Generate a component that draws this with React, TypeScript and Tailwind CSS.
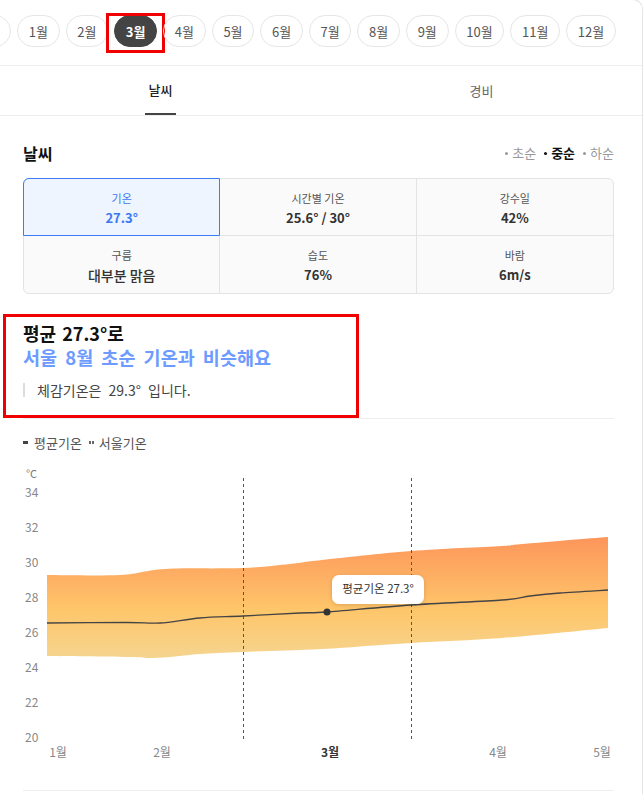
import React from 'react'

type Pt = [number, number]

const MONTHS = ['1월', '2월', '3월', '4월', '5월', '6월', '7월', '8월', '9월', '10월', '11월', '12월']

const TOP: Pt[] = [[47, 574], [120, 574], [165, 568], [243, 567], [290, 563], [322, 559], [411, 550], [502, 545], [522, 543], [608, 536]]
const BOTTOM: Pt[] = [[47, 655], [127, 656], [150, 657], [170, 656], [200, 653], [243, 651], [322, 648], [411, 642], [502, 637], [608, 627]]
const AVG: Pt[] = [[47, 622], [127, 621.5], [160, 622], [200, 617], [243, 615], [300, 612], [327, 611], [411, 604], [502, 599], [530, 595], [560, 592], [608, 589]]

function smooth(pts: Pt[]) {
  let d = `M${pts[0][0]},${pts[0][1]}`
  for (let i = 0; i < pts.length - 1; i++) {
    const p0 = pts[i - 1] || pts[i]
    const p1 = pts[i]
    const p2 = pts[i + 1]
    const p3 = pts[i + 2] || p2
    const c1x = p1[0] + (p2[0] - p0[0]) / 6
    const c1y = p1[1] + (p2[1] - p0[1]) / 6
    const c2x = p2[0] - (p3[0] - p1[0]) / 6
    const c2y = p2[1] - (p3[1] - p1[1]) / 6
    d += ` C${c1x},${c1y} ${c2x},${c2y} ${p2[0]},${p2[1]}`
  }
  return d
}

const band = smooth(TOP) + ' L' + smooth([...BOTTOM].reverse()).slice(1) + ' Z'

const CELLS = [
  { label: '기온', value: '27.3°', active: true },
  { label: '시간별 기온', value: '25.6° / 30°' },
  { label: '강수일', value: '42%' },
  { label: '구름', value: '대부분 맑음', big: true },
  { label: '습도', value: '76%' },
  { label: '바람', value: '6m/s' },
]

const Y_TICKS = [34, 32, 30, 28, 26, 24, 22, 20]
const X_TICKS = [
  { x: 58, t: '1월' },
  { x: 162, t: '2월' },
  { x: 330, t: '3월', bold: true },
  { x: 498, t: '4월' },
  { x: 602, t: '5월' },
]

function Chart() {
  return (
    <svg className="block" width="643" height="300" viewBox="0 460 643 300">
      <defs>
        <linearGradient id="bandFill" gradientUnits="userSpaceOnUse" x1="0" y1="536" x2="0" y2="657">
          <stop offset="0" stopColor="#fd955b" />
          <stop offset="0.6" stopColor="#fec66a" />
          <stop offset="1" stopColor="#f5d48f" />
        </linearGradient>
        <filter id="tipShadow" x="-20%" y="-40%" width="140%" height="180%">
          <feDropShadow dx="0" dy="1" stdDeviation="2" floodColor="#000" floodOpacity="0.15" />
        </filter>
      </defs>
      <text x="26" y="477" fontSize="11" fill="#777">°C</text>
      {Y_TICKS.map((t, i) => (
        <text key={t} x="25" y={492 + i * 35 + 4} fontSize="12" fill="#888">
          {t}
        </text>
      ))}
      <path d={band} fill="url(#bandFill)" />
      <line x1="243.5" y1="477" x2="243.5" y2="739" stroke="#555" strokeDasharray="3 3" />
      <line x1="411.5" y1="477" x2="411.5" y2="739" stroke="#555" strokeDasharray="3 3" />
      <path d={smooth(AVG)} fill="none" stroke="#444" strokeWidth="1.3" />
      <circle cx="327" cy="611" r="3.5" fill="#333" />
      <rect x="332" y="574" width="92" height="29" rx="7" fill="#fff" filter="url(#tipShadow)" />
      <text x="378" y="592" fontSize="11.5" fill="#333" textAnchor="middle">
        평균기온 27.3°
      </text>
      {X_TICKS.map((l) => (
        <text
          key={l.t}
          x={l.x}
          y="756"
          fontSize="12"
          textAnchor="middle"
          fill={l.bold ? '#333' : '#888'}
          fontWeight={l.bold ? 700 : 400}
        >
          {l.t}
        </text>
      ))}
    </svg>
  )
}

function Dot({ dark }: { dark?: boolean }) {
  return <span className={`inline-block w-[3px] h-[3px] rounded-full mr-[4px] ${dark ? 'bg-[#111]' : 'bg-[#999]'}`} />
}

export default function App() {
  return (
    <div className="w-[643px] -mt-px border-t border-r border-[#e4e4e4] rounded-tr-[10px] bg-white overflow-hidden font-['Noto_Sans_CJK_KR','Noto_Sans',sans-serif] text-[#333]">
      {/* months */}
      <div className="flex gap-[6px] pt-[15px] pb-[18px] border-b border-[#eeeeee] overflow-hidden">
        <div className="shrink-0 -ml-[31px] w-[42px] h-[32px] rounded-full border border-[#e6e6e6]" />
        {MONTHS.map((m) => {
          const active = m === '3월'
          return (
            <div key={m} className="relative shrink-0">
              <div
                className={`h-[32px] px-[10.7px] rounded-full flex items-center text-[13px] leading-none ${
                  active ? 'bg-[#444] text-white font-bold border border-[#444]' : 'border border-[#e6e6e6] text-[#555]'
                }`}
              >
                {m}
              </div>
              {active && (
                <div className="absolute left-[-8px] right-[-8px] top-[-2px] bottom-[-6px] border-[3px] border-[#f00000]" />
              )}
            </div>
          )
        })}
      </div>

      {/* tabs */}
      <div className="flex border-b border-[#eeeeee]">
        <div className="flex-1 flex justify-center h-[49px]">
          <span className="flex items-center px-[4px] border-b-2 border-[#444] text-[13px] font-medium text-[#222]">날씨</span>
        </div>
        <div className="flex-1 flex justify-center items-center h-[49px] text-[13px] text-[#666]">경비</div>
      </div>

      <div className="pl-[23px] pr-[28px]">
        <div className="mt-[26px] flex items-center justify-between h-[22px]">
          <span className="text-[16px] font-bold text-[#111]">날씨</span>
          <div className="flex items-center gap-[8px] text-[13px]">
            <span className="flex items-center text-[#999]">
              <Dot />초순
            </span>
            <span className="flex items-center text-[#111] font-bold">
              <Dot dark />중순
            </span>
            <span className="flex items-center text-[#999]">
              <Dot />하순
            </span>
          </div>
        </div>

        <div className="mt-[14px] grid grid-cols-3 border border-[#e3e3e3] rounded-[6px] bg-[#fafafa]">
          {CELLS.map((c, i) => (
            <div
              key={c.label}
              className={`relative h-[57px] pt-[11px] flex flex-col items-center ${i % 3 !== 2 ? 'border-r border-[#e3e3e3]' : ''} ${
                i < 3 ? 'border-b border-[#e3e3e3]' : ''
              } ${c.active ? 'bg-[#eef5ff] rounded-tl-[6px]' : ''}`}
            >
              {c.active && <div className="absolute -inset-px border border-[#3d7cf5] rounded-tl-[6px]" />}
              <span className={`text-[11px] leading-[16px] ${c.active ? 'text-[#3a78f2]' : 'text-[#555]'}`}>{c.label}</span>
              <span
                className={`mt-[2px] leading-[20px] ${c.big ? 'text-[14px] font-medium' : 'text-[13px] font-semibold'} ${
                  c.active ? 'text-[#3a78f2]' : 'text-[#333]'
                }`}
              >
                {c.value}
              </span>
            </div>
          ))}
        </div>

        <div className="relative mt-[27px] pb-[18px]">
          <div className="text-[18px] leading-[24px] font-bold text-[#111] [word-spacing:2px]">평균 27.3°로</div>
          <div className="text-[18.5px] leading-[24px] font-bold text-[#6d9bff] [word-spacing:4px]">서울 8월 초순 기온과 비슷해요</div>
          <div className="mt-[11px] flex items-center h-[20px]">
            <span className="w-[2px] h-[14px] bg-[#dddddd]" />
            <span className="ml-[12px] text-[14px] text-[#444] [word-spacing:4px]">체감기온은 29.3° 입니다.</span>
          </div>
          <div className="absolute left-[-20px] top-[-7px] w-[356px] h-[104px] border-[3px] border-[#f00000]" />
        </div>

        <div className="border-t border-[#eeeeee] pt-[14px] flex items-center gap-[7px] h-[34px] text-[13px] text-[#555] leading-[20px]">
          <span className="flex items-center">
            <span className="w-[5px] h-[3px] bg-[#444] mr-[6px]" />
            평균기온
          </span>
          <span className="flex items-center">
            <span className="w-[2px] h-[3px] bg-[#666] mr-[1px]" />
            <span className="w-[2px] h-[3px] bg-[#666] mr-[5px]" />
            서울기온
          </span>
        </div>
      </div>

      <div className="mt-[9px]">
        <Chart />
      </div>
      <div className="mx-[23px] mr-[28px] mt-[29px] h-px bg-[#eeeeee]" />
      <div className="h-[20px]" />
    </div>
  )
}
